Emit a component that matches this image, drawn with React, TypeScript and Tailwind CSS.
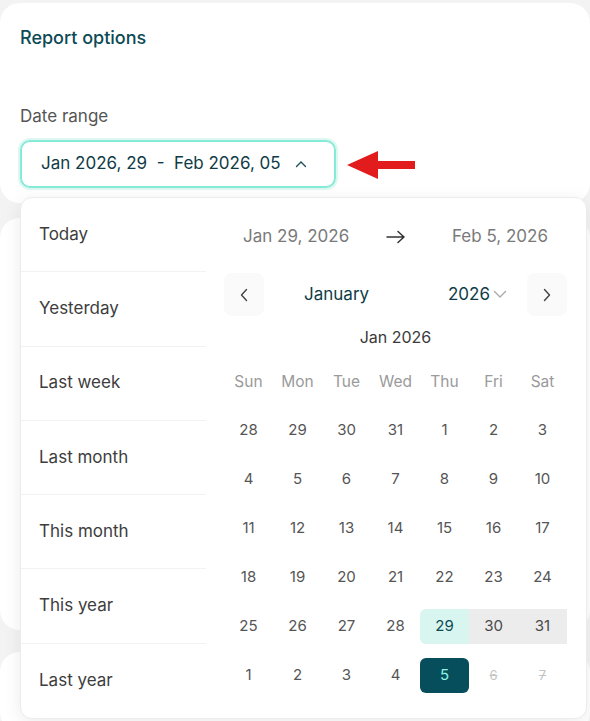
import React from "react";

const font = { fontFamily: "Inter, 'Open Sans', sans-serif" };

const presets = ["Today", "Yesterday", "Last week", "Last month", "This month", "This year", "Last year"];
const weekdays = ["Sun", "Mon", "Tue", "Wed", "Thu", "Fri", "Sat"];

type Day = { n: number; kind?: "start" | "range" | "end" | "disabled" };

const weeks: Day[][] = [
  [28, 29, 30, 31, 1, 2, 3].map((n) => ({ n })),
  [4, 5, 6, 7, 8, 9, 10].map((n) => ({ n })),
  [11, 12, 13, 14, 15, 16, 17].map((n) => ({ n })),
  [18, 19, 20, 21, 22, 23, 24].map((n) => ({ n })),
  [
    { n: 25 }, { n: 26 }, { n: 27 }, { n: 28 },
    { n: 29, kind: "start" }, { n: 30, kind: "range" }, { n: 31, kind: "range" },
  ],
  [
    { n: 1 }, { n: 2 }, { n: 3 }, { n: 4 },
    { n: 5, kind: "end" }, { n: 6, kind: "disabled" }, { n: 7, kind: "disabled" },
  ],
];

function DayCell({ d }: { d: Day }) {
  if (d.kind === "start")
    return (
      <div className="h-[35px] flex items-center justify-center bg-[#d8f6ef] rounded-l-[6px] text-[15px] text-[#0f4a55]">
        {d.n}
      </div>
    );
  if (d.kind === "range")
    return (
      <div className="h-[35px] flex items-center justify-center bg-[#ececec] text-[15px] text-[#4a4a4a]">
        {d.n}
      </div>
    );
  if (d.kind === "end")
    return (
      <div className="h-[35px] flex items-center justify-center bg-[#064e5b] rounded-[6px] text-[15px] text-[#8ff3e3]">
        {d.n}
      </div>
    );
  if (d.kind === "disabled")
    return (
      <div className="h-[35px] flex items-center justify-center text-[13px] text-[#c4c4c4] line-through">
        {d.n}
      </div>
    );
  return (
    <div className="h-[35px] flex items-center justify-center text-[15px] text-[#555555]">{d.n}</div>
  );
}

export default function App() {
  return (
    <div className="relative min-h-[721px] w-[590px] overflow-hidden bg-[#f3f3f3]" style={font}>
      {/* report options card */}
      <div className="mt-[3px] h-[200px] rounded-[20px] bg-white px-5 pt-[22px]">
        <h2 className="text-[18px] font-medium leading-[26px] text-[#0c4a55]">Report options</h2>
        <div className="mt-[53px] text-[17px] leading-[24px] text-[#555555]">Date range</div>
        <div className="mt-[12px] flex h-[48px] w-[316px] items-center rounded-[10px] border-2 border-[#86ead8] pl-[19px] text-[17px] text-[#0f3b47] shadow-[0_0_0_2px_#dcf8f1]">
          <span className="whitespace-pre">Jan 2026, 29  -  Feb 2026, 05</span>
          <svg className="ml-[14px]" width="12" height="8" viewBox="0 0 12 8" fill="none">
            <path d="M1.5 6.5L6 2l4.5 4.5" stroke="#1d4f5a" strokeWidth="1.4" strokeLinecap="round" />
          </svg>
        </div>
      </div>

      {/* cards underneath */}
      <div className="mt-[15px] h-[412px] rounded-[20px] bg-white" />
      <div className="mt-[22px] h-[80px] rounded-[20px] bg-white" />

      {/* pointer */}
      <svg className="absolute left-[345px] top-[148px]" width="72" height="34" viewBox="0 0 72 34">
        <path d="M2 17L33 3v10h37v8H33v10z" fill="#e21c1c" />
      </svg>

      {/* date range popover */}
      <div className="absolute left-[20px] top-[197px] flex h-[522px] w-[567px] rounded-[12px] border border-[#ececec] bg-white shadow-[0_4px_18px_rgba(0,0,0,0.08)]">
        <div className="w-[185px]">
          {presets.map((p, i) => (
            <div
              key={p}
              className={`flex h-[74.3px] items-center pl-[18px] text-[17px] text-[#3d3d3d] ${
                i < presets.length - 1 ? "border-b border-[#f2f2f2]" : ""
              }`}
            >
              {p}
            </div>
          ))}
        </div>

        <div className="flex-1 pl-[18px] pr-[19px]">
          <div className="mt-[20px] grid h-[38px] grid-cols-[1fr_auto_1fr] items-center px-[19px] text-[17px] text-[#7a7a7a]">
            <span>Jan 29, 2026</span>
            <svg width="20" height="14" viewBox="0 0 20 14" fill="none">
              <path d="M1 7h17M12 1.5L18 7l-6 5.5" stroke="#333" strokeWidth="1.5" strokeLinecap="round" strokeLinejoin="round" />
            </svg>
            <span className="text-right">Feb 5, 2026</span>
          </div>

          <div className="mt-[17px] flex h-[43px] items-center">
            <button className="flex h-[43px] w-[40px] items-center justify-center rounded-[8px] bg-[#fafafa]">
              <svg width="8" height="14" viewBox="0 0 8 14" fill="none">
                <path d="M6.5 1.5L1.5 7l5 5.5" stroke="#444" strokeWidth="1.4" strokeLinecap="round" strokeLinejoin="round" />
              </svg>
            </button>
            <span className="ml-[40px] text-[17px] text-[#0e3c47]">January</span>
            <span className="ml-auto flex items-center text-[17px] text-[#0e3c47]">
              2026
              <svg className="ml-[3px]" width="14" height="9" viewBox="0 0 14 9" fill="none">
                <path d="M1.5 1.5L7 7l5.5-5.5" stroke="#aaa" strokeWidth="1.4" strokeLinecap="round" strokeLinejoin="round" />
              </svg>
            </span>
            <button className="ml-[20px] flex h-[43px] w-[40px] items-center justify-center rounded-[8px] bg-[#fafafa]">
              <svg width="8" height="14" viewBox="0 0 8 14" fill="none">
                <path d="M1.5 1.5L6.5 7l-5 5.5" stroke="#444" strokeWidth="1.4" strokeLinecap="round" strokeLinejoin="round" />
              </svg>
            </button>
          </div>

          <div className="mt-[9px] text-center text-[16px] leading-[24px] text-[#3a3a3a]">Jan 2026</div>

          <div className="mt-[23px] grid grid-cols-7 text-center text-[15.5px] leading-[20px] text-[#9a9a9a]">
            {weekdays.map((w) => (
              <div key={w}>{w}</div>
            ))}
          </div>

          <div className="mt-[21px] flex flex-col gap-[14px]">
            {weeks.map((wk, i) => (
              <div key={i} className="grid grid-cols-7">
                {wk.map((d, j) => (
                  <DayCell key={j} d={d} />
                ))}
              </div>
            ))}
          </div>
        </div>
      </div>
    </div>
  );
}
